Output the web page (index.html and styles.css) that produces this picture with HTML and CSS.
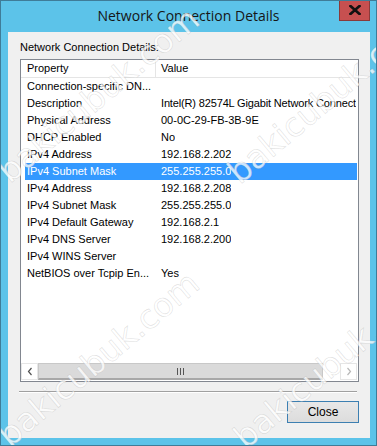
FILE: index.html
```html
<!DOCTYPE html>
<html>
<head>
<meta charset="utf-8">
<link rel="stylesheet" href="styles.css">
</head>
<body>
<div class="window">
  <div class="titlebar">
    <div class="title">Network Connection Details</div>
    <div class="close-btn"><svg width="12" height="10" viewBox="0 0 12 10"><path d="M1.5 1 L10.5 9 M10.5 1 L1.5 9" stroke="#111" stroke-width="2.6" stroke-linecap="square"/></svg></div>
  </div>
  <div class="client">
    <div class="label">Network Connection Details:</div>
    <div class="listbox">
      <div class="header">
        <div class="hcell c1">Property</div>
        <div class="hcell c2">Value</div>
      </div>
      <div class="rows">
        <div class="row"><div class="cell c1">Connection-specific DN...</div><div class="cell c2"></div></div>
        <div class="row"><div class="cell c1">Description</div><div class="cell c2 tight">Intel(R) 82574L Gigabit Network Connect</div></div>
        <div class="row"><div class="cell c1">Physical Address</div><div class="cell c2">00-0C-29-FB-3B-9E</div></div>
        <div class="row"><div class="cell c1">DHCP Enabled</div><div class="cell c2">No</div></div>
        <div class="row"><div class="cell c1">IPv4 Address</div><div class="cell c2">192.168.2.202</div></div>
        <div class="row selected"><div class="cell c1">IPv4 Subnet Mask</div><div class="cell c2">255.255.255.0</div></div>
        <div class="row"><div class="cell c1">IPv4 Address</div><div class="cell c2">192.168.2.208</div></div>
        <div class="row"><div class="cell c1">IPv4 Subnet Mask</div><div class="cell c2">255.255.255.0</div></div>
        <div class="row"><div class="cell c1">IPv4 Default Gateway</div><div class="cell c2">192.168.2.1</div></div>
        <div class="row"><div class="cell c1">IPv4 DNS Server</div><div class="cell c2">192.168.2.200</div></div>
        <div class="row"><div class="cell c1">IPv4 WINS Server</div><div class="cell c2"></div></div>
        <div class="row"><div class="cell c1">NetBIOS over Tcpip En...</div><div class="cell c2">Yes</div></div>
      </div>
      <div class="hscroll">
        <div class="sbtn left"><svg width="6" height="9" viewBox="0 0 6 9"><path d="M4.5 1 L1.5 4.5 L4.5 8" fill="none" stroke="#505050" stroke-width="1.2"/></svg></div>
        <div class="thumb"><span class="grip"></span><span class="grip"></span><span class="grip"></span></div>
        <div class="track"></div>
        <div class="sbtn right"><svg width="6" height="9" viewBox="0 0 6 9"><path d="M1.5 1 L4.5 4.5 L1.5 8" fill="none" stroke="#b8b8b8" stroke-width="1.2"/></svg></div>
      </div>
    </div>
    <div class="separator"></div>
    <div class="actions">
      <div class="button">Close</div>
    </div>
  </div>
  <div class="wm wm1">bakicubuk.com</div>
  <div class="wm wm2">bakicubuk.com</div>
  <div class="wm wm3">bakicubuk.com</div>
  <div class="wm wm4">bakicubuk.com</div>
</div>
</body>
</html>
```

FILE: styles.css
```css
html, body {
  margin: 0;
  padding: 0;
  background: #ffffff;
}

.window {
  position: relative;
  width: 377px;
  height: 446px;
  box-sizing: border-box;
  border: 1px solid #3f7c98;
  background: #5cc3e9;
  padding: 0 6px 7px 7px;
  display: flex;
  flex-direction: column;
  overflow: hidden;
  font-family: "Liberation Sans", Arial, sans-serif;
  font-size: 11px;
  color: #000;
}

.titlebar {
  height: 31px;
  display: grid;
  grid-template-areas: "stack";
  margin: 0 -6px 0 -7px;
}

.title {
  grid-area: stack;
  justify-self: center;
  align-self: center;
  font-family: "Open Sans", "Noto Sans", sans-serif;
  font-size: 14px;
  color: #161616;
  margin-top: -2px;
}

.close-btn {
  grid-area: stack;
  justify-self: end;
  align-self: start;
  margin-right: 6px;
  margin-top: -1px;
  width: 31px;
  height: 21px;
  box-sizing: border-box;
  background: #c75050;
  border: 1px solid #8a3a3a;
  border-top: none;
  display: flex;
  align-items: center;
  justify-content: center;
}

.client {
  flex: 1;
  background: #f0f0f0;
  padding: 9px 11px 0 12px;
  display: flex;
  flex-direction: column;
}

.label {
  line-height: 13px;
  height: 13px;
}

.listbox {
  margin-top: 5px;
  height: 323px;
  box-sizing: border-box;
  border: 1px solid #828790;
  background: #ffffff;
  display: flex;
  flex-direction: column;
}

.header {
  display: flex;
  height: 17px;
  border-bottom: 1px solid #e5e5e5;
  box-sizing: content-box;
}

.hcell {
  line-height: 17px;
  box-sizing: border-box;
}

.hcell.c1 {
  width: 135px;
  padding-left: 6px;
  border-right: 1px solid #e5e5e5;
}

.hcell.c2 {
  flex: 1;
  padding-left: 5px;
}

.rows {
  flex: 1;
  display: flex;
  flex-direction: column;
}

.row {
  display: flex;
  height: 17px;
  line-height: 17px;
  margin-left: 4px;
  margin-right: 1px;
  white-space: nowrap;
  overflow: hidden;
}

.row.selected {
  background: #3399ff;
  color: #ffffff;
}

.cell.c1 {
  width: 131px;
  padding-left: 2px;
  box-sizing: border-box;
  flex: none;
}

.cell.c2 {
  padding-left: 5px;
  overflow: hidden;
}

.cell.tight {
  letter-spacing: -0.15px;
}

.hscroll {
  height: 17px;
  display: flex;
  background: #ffffff;
  margin-bottom: 1px;
}

.sbtn {
  width: 17px;
  box-sizing: border-box;
  border: 1px solid #e6e6e6;
  background: #ffffff;
  display: flex;
  align-items: center;
  justify-content: center;
}

.sbtn.right {
  margin-right: 1px;
}

.thumb {
  width: 285px;
  box-sizing: border-box;
  background: #dadada;
  border: 1px solid #c8c8c8;
  border-bottom: 2px solid #a8a8a8;
  display: flex;
  align-items: center;
  justify-content: center;
  gap: 2px;
}

.grip {
  width: 1px;
  height: 7px;
  background: #555;
}

.track {
  flex: 1;
  background: #ffffff;
}

.separator {
  margin-top: 9px;
  margin-left: -1px;
  margin-right: 2px;
  height: 1px;
  background: #a0a0a0;
  border-bottom: 1px solid #ffffff;
}

.actions {
  display: flex;
  justify-content: flex-end;
  margin-top: 8px;
}

.button {
  width: 72px;
  height: 22px;
  box-sizing: border-box;
  border: 1px solid #3c7fb1;
  background: linear-gradient(#e8e8e8, #dcdcdc);
  display: flex;
  align-items: center;
  justify-content: center;
  font-size: 12px;
  color: #000;
}

.wm {
  position: absolute;
  left: 0;
  top: 0;
  font-family: "DejaVu Sans", sans-serif;
  font-size: 33px;
  line-height: 33px;
  white-space: nowrap;
  color: rgba(255, 255, 255, 0.75);
  -webkit-text-stroke: 0.6px rgba(150, 150, 150, 0.3);
  transform-origin: 0 100%;
  transform: rotate(-40deg);
  pointer-events: none;
}

.wm1 { left: 12px; top: 154px; }
.wm2 { left: 12px; top: 418px; }
.wm3 { left: 242px; top: 155px; }
.wm4 { left: 248px; top: 420px; }
```
